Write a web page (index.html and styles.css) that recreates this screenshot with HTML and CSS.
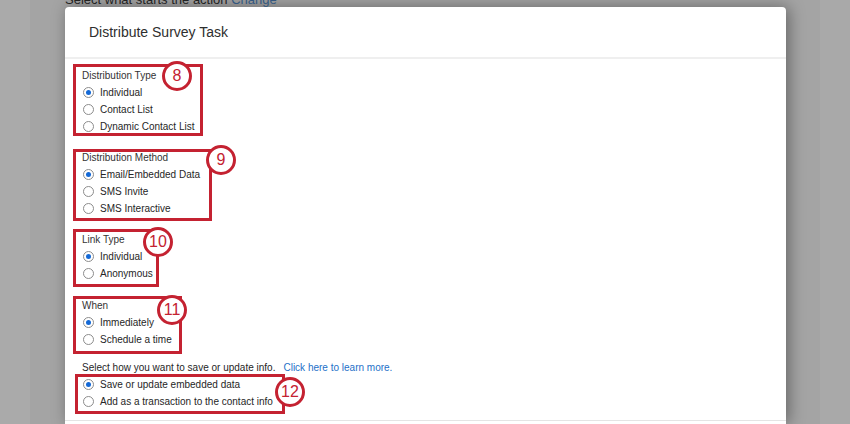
FILE: index.html
```html
<!DOCTYPE html>
<html lang="en">
<head>
<meta charset="utf-8">
<title>Distribute Survey Task</title>
<link rel="stylesheet" href="styles.css">
</head>
<body>
<div class="page">
  <div class="bg-title"><span class="bg-line">Select what starts the action <span class="bg-link">Change</span></span></div>
  <div class="modal">
    <div class="modal-head">
      <h1 class="modal-title">Distribute Survey Task</h1>
    </div>
    <div class="modal-body">
      <div class="group g1">
        <div class="group-label">Distribution Type</div>
        <div class="opt"><span class="radio checked"></span>Individual</div>
        <div class="opt"><span class="radio"></span>Contact List</div>
        <div class="opt"><span class="radio"></span>Dynamic Contact List</div>
        <span class="badge b1">8</span>
      </div>
      <div class="group g2">
        <div class="group-label">Distribution Method</div>
        <div class="opt"><span class="radio checked"></span>Email/Embedded Data</div>
        <div class="opt"><span class="radio"></span>SMS Invite</div>
        <div class="opt"><span class="radio"></span>SMS Interactive</div>
        <span class="badge b2">9</span>
      </div>
      <div class="group g3">
        <div class="group-label">Link Type</div>
        <div class="opt"><span class="radio checked"></span>Individual</div>
        <div class="opt"><span class="radio"></span>Anonymous</div>
        <span class="badge b3">10</span>
      </div>
      <div class="group g4">
        <div class="group-label">When</div>
        <div class="opt"><span class="radio checked"></span>Immediately</div>
        <div class="opt"><span class="radio"></span>Schedule a time</div>
        <span class="badge b4">11</span>
      </div>
      <div class="save-text">Select how you want to save or update info.<a class="learn" href="#">Click here to learn more.</a></div>
      <div class="group g5">
        <div class="opt"><span class="radio checked"></span>Save or update embedded data</div>
        <div class="opt"><span class="radio"></span>Add as a transaction to the contact info</div>
        <span class="badge b5">12</span>
      </div>
    </div>
    <div class="modal-foot"></div>
  </div>
</div>
</body>
</html>
```
FILE: styles.css
```css
html, body {
  margin: 0;
  padding: 0;
  height: 100%;
}
body {
  background: linear-gradient(to right, #aaaaaa 0, #aaaaaa 30px, #a4a4a4 30px, #a4a4a4 820px, #a9a9a9 820px);
  font-family: "Liberation Sans", Arial, sans-serif;
  overflow: hidden;
}
.page {
  padding-left: 65px;
}
.bg-title {
  height: 7px;
  display: flex;
  align-items: flex-end;
}
.bg-line {
  font-size: 13px;
  line-height: 14px;
  color: #222;
  white-space: nowrap;
}
.bg-link {
  color: #33577f;
}
.modal {
  width: 721px;
  height: 417px;
  overflow: hidden;
  background: #fff;
  border-radius: 4px 4px 0 0;
  box-shadow: 3px 0 16px rgba(0, 0, 0, 0.38);
}
.modal-head {
  height: 50px;
  display: flex;
  align-items: center;
  padding-left: 24px;
  border-bottom: 2px solid #efefef;
}
.modal-title {
  margin: 0;
  font-size: 14px;
  font-weight: normal;
  color: #2e2e2e;
}
.modal-body {
  padding: 8px 0 0 17px;
}
.group {
  position: relative;
  font-size: 10px;
  line-height: 17px;
  margin-bottom: 14px;
}
.group::after {
  content: "";
  position: absolute;
  box-sizing: border-box;
  border: 3px solid #c42231;
  left: -9px;
}
.g1::after { top: -3px; width: 130px; height: 72px; }
.g2::after { top: 0; width: 139px; height: 72px; }
.g3 { margin-bottom: 15px; }
.g3::after { top: -2px; width: 86px; height: 58px; }
.g4 { margin-bottom: 11px; }
.g4::after { top: -1px; width: 109px; height: 58px; }
.g5 { margin-bottom: 10px; }
.g5::after { left: -7px; top: -2px; width: 210px; height: 40px; }

.group-label {
  color: #333;
  height: 17px;
}
.opt {
  display: flex;
  align-items: center;
  height: 17px;
  color: #262626;
  white-space: nowrap;
}
.radio {
  box-sizing: border-box;
  width: 11px;
  height: 11px;
  border: 1px solid #8c8c8c;
  border-radius: 50%;
  margin: 0 6px 0 1px;
  display: flex;
  align-items: center;
  justify-content: center;
  background: #fff;
}
.radio.checked::before {
  content: "";
  width: 5px;
  height: 5px;
  border-radius: 50%;
  background: #1469d6;
}
.save-text {
  font-size: 10px;
  line-height: 17px;
  color: #262626;
  white-space: nowrap;
}
.learn {
  color: #2470c8;
  text-decoration: none;
  margin-left: 8px;
}
.badge {
  position: absolute;
  z-index: 2;
  box-sizing: border-box;
  width: 30px;
  height: 30px;
  border: 3px solid #c42231;
  border-radius: 50%;
  background: #fff;
  color: #c42231;
  font-size: 16px;
  line-height: 24px;
  text-align: center;
}
.b1 { left: 80px; top: -6px; }
.b2 { left: 124px; top: -4px; }
.b3 { left: 61px; top: -4px; }
.b4 { left: 75px; top: -2px; }
.b5 { left: 193px; top: 1px; }
.modal-foot {
  border-top: 1px solid #e4e4e4;
}
```
